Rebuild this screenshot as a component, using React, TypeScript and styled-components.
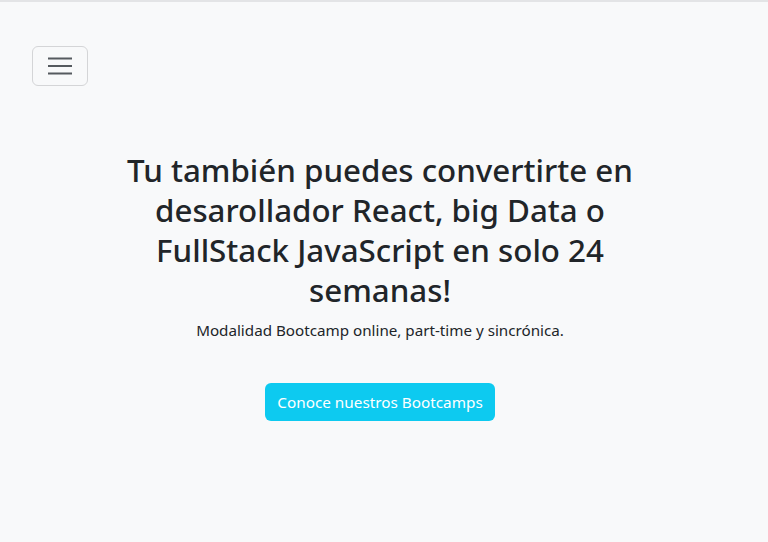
import React from "react";
import styled, { createGlobalStyle } from "styled-components";

const Global = createGlobalStyle`
  html, body { margin: 0; padding: 0; background: #f8f9fa; }
  body {
    font-family: "Noto Sans", "Open Sans", sans-serif;
    color: #212529;
    min-height: 542px;
  }
`;

const Page = styled.div`
  min-height: 542px;
  background: #f8f9fa;
  border-top: 2px solid #e3e4e6;
  box-sizing: border-box;
`;

const Navbar = styled.nav`
  display: flex;
  padding: 44px 32px 0;
`;

const Toggler = styled.button`
  width: 56px;
  height: 40px;
  box-sizing: border-box;
  border: 1px solid #d4d5d7;
  border-radius: 6px;
  background: transparent;
  display: flex;
  align-items: center;
  justify-content: center;
  padding: 0;
`;

const Hero = styled.section`
  display: flex;
  flex-direction: column;
  align-items: center;
  text-align: center;
  padding: 64px 8px 0 0;
`;

const Title = styled.h1`
  margin: 0 0 8px;
  font-size: 31.3px;
  line-height: 40px;
  font-weight: 500;
  letter-spacing: 0;
`;

const Lead = styled.p`
  margin: 0;
  font-size: 15.2px;
  line-height: 24px;
`;

const Cta = styled.button`
  margin-top: 41px;
  height: 38px;
  padding: 0 12px;
  border: none;
  border-radius: 6px;
  background: #0dcaf0;
  color: #fff;
  font-family: inherit;
  font-size: 15.3px;
`;

export default function App() {
  return (
    <>
      <Global />
      <Page>
        <Navbar>
          <Toggler aria-label="menu">
            <svg width="26" height="22" viewBox="0 0 26 22">
              <path d="M1 3.5h24M1 11h24M1 18.5h24" stroke="#555a5f" strokeWidth="2" />
            </svg>
          </Toggler>
        </Navbar>
        <Hero>
          <Title>
            Tu también puedes convertirte en<br />
            desarollador React, big Data o<br />
            FullStack JavaScript en solo 24<br />
            semanas!
          </Title>
          <Lead>Modalidad Bootcamp online, part-time y sincrónica.</Lead>
          <Cta>Conoce nuestros Bootcamps</Cta>
        </Hero>
      </Page>
    </>
  );
}
